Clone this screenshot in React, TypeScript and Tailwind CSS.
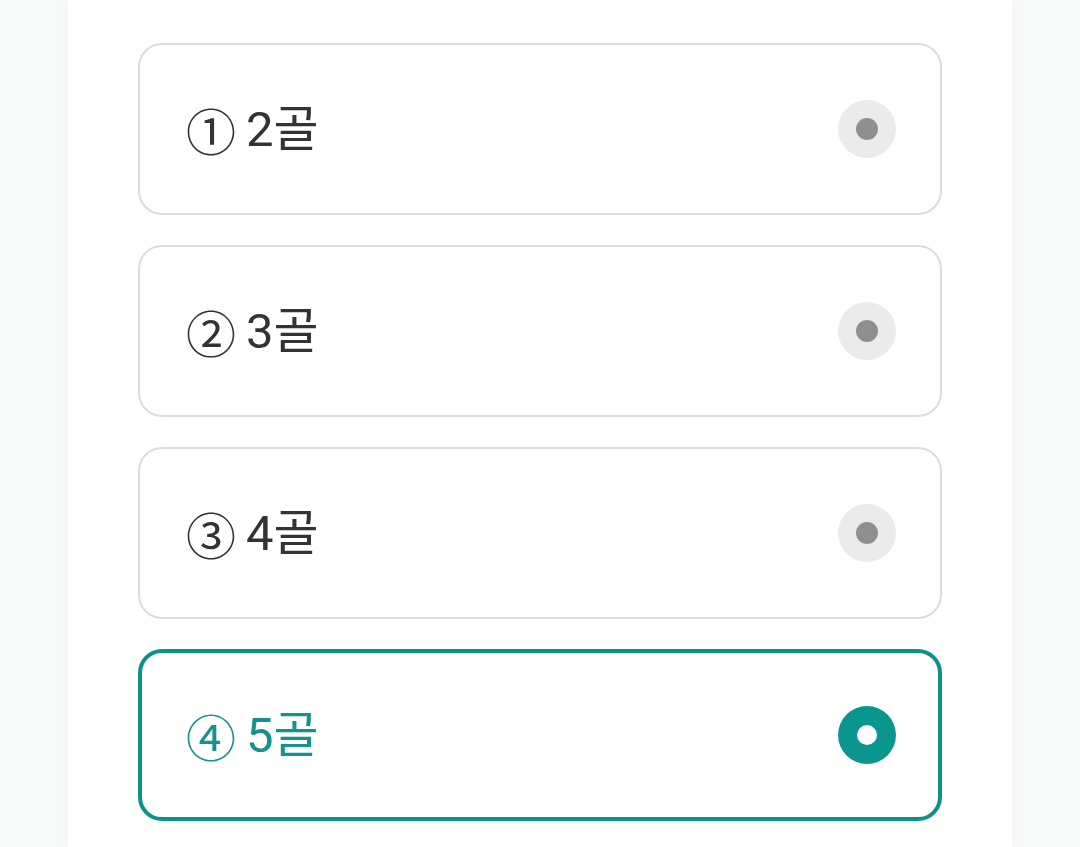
import { useState } from 'react';

const options = [
  { id: 1, mark: '①', label: '2골' },
  { id: 2, mark: '②', label: '3골' },
  { id: 3, mark: '③', label: '4골' },
  { id: 4, mark: '④', label: '5골' },
];

export default function App() {
  const [selected, setSelected] = useState(4);

  return (
    <div className="min-h-[847px] bg-[#f8f9f9] font-['Roboto','Noto_Sans_CJK_KR',sans-serif]">
      <div className="mx-[68px] min-h-[847px] bg-white px-[70px] pt-[43px] shadow-[0_0_18px_rgba(0,0,0,0.03)]">
        <ul className="flex flex-col gap-[30px]">
          {options.map((opt) => {
            const active = opt.id === selected;
            return (
              <li key={opt.id}>
                <button
                  type="button"
                  onClick={() => setSelected(opt.id)}
                  className={
                    active
                      ? 'flex h-[172px] w-full items-center justify-between rounded-[24px] border-[4px] border-[#0f918b] bg-white pl-[44px] pr-[42px] text-[#16918c]'
                      : 'flex h-[172px] w-full items-center justify-between rounded-[24px] border-2 border-[#dcdcdc] bg-white pl-[46px] pr-[44px] text-[#333333]'
                  }
                >
                  <span className="flex items-center gap-[10px] text-[49px] leading-none">
                    <span className="font-['Noto_Sans_CJK_KR',sans-serif] text-[50px]">{opt.mark}</span>
                    <span>{opt.label}</span>
                  </span>
                  {active ? (
                    <span className="flex h-[58px] w-[58px] items-center justify-center rounded-full bg-[#0a968f]">
                      <span className="h-[20px] w-[20px] rounded-full bg-white" />
                    </span>
                  ) : (
                    <span className="flex h-[58px] w-[58px] items-center justify-center rounded-full bg-[#ebebeb]">
                      <span className="h-[22px] w-[22px] rounded-full bg-[#8f8f8f]" />
                    </span>
                  )}
                </button>
              </li>
            );
          })}
        </ul>
      </div>
    </div>
  );
}
